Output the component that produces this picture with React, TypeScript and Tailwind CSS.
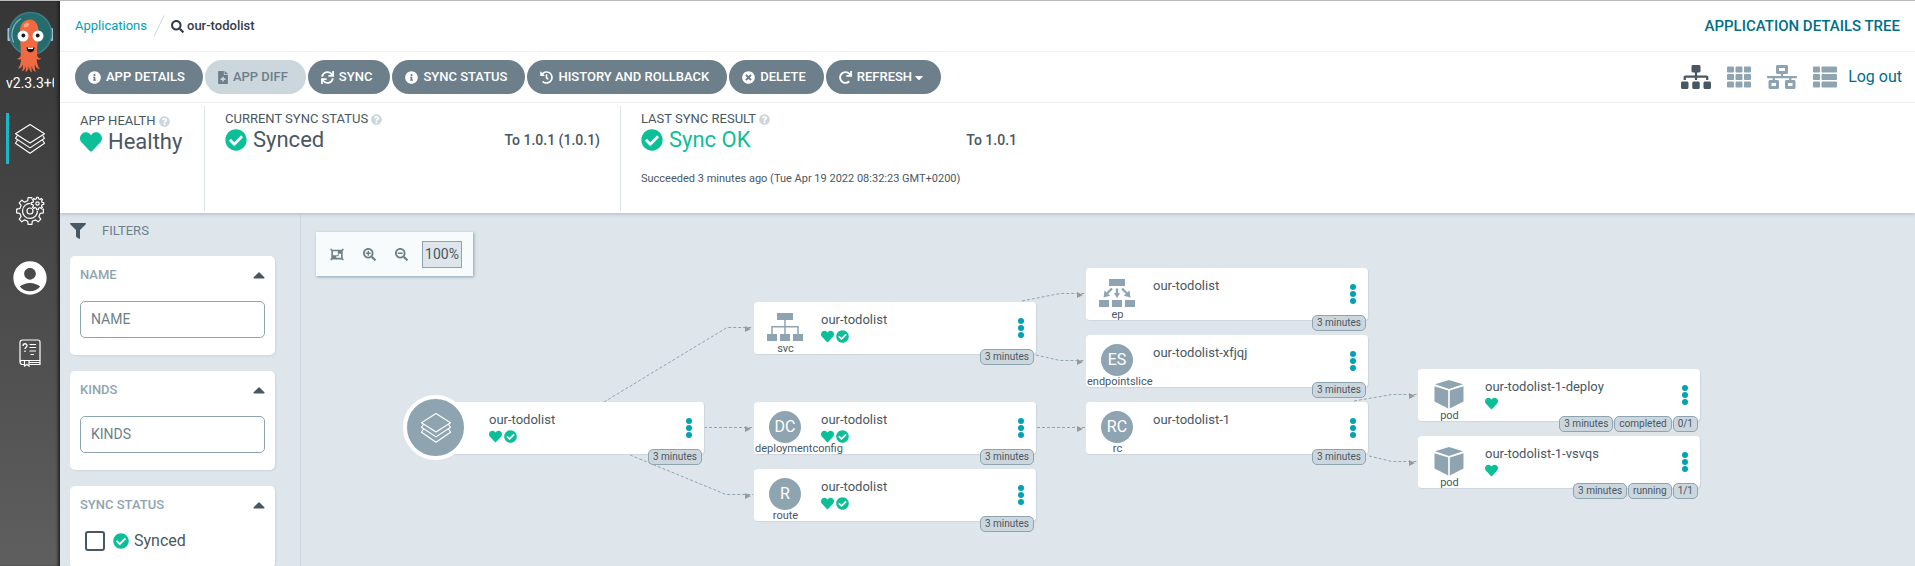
import type { ReactNode } from "react";
import {
  FaCaretDown,
  FaCaretUp,
  FaCheckCircle,
  FaFileMedical,
  FaFilter,
  FaHeart,
  FaHistory,
  FaInfoCircle,
  FaNetworkWired,
  FaObjectGroup,
  FaQuestionCircle,
  FaRedo,
  FaSearch,
  FaSearchMinus,
  FaSearchPlus,
  FaSitemap,
  FaSync,
  FaTh,
  FaThList,
  FaTimesCircle,
} from "react-icons/fa";
import { MdAccountCircle } from "react-icons/md";

function ArgoLogo() {
  return (
    <svg viewBox="0 0 48 62" className="h-[62px] w-12" aria-label="Argo">
      <rect x="1.500" y="17" width="3.500" height="13" rx="1" fill="#a9c6dc" />
      <rect x="43.500" y="17" width="3.500" height="13" rx="1" fill="#a9c6dc" />
      <circle cx="24.500" cy="22.500" r="21" fill="#256d6c" stroke="#3f7d8c" strokeWidth="1.500" />
      <path d="M7.500 31a18.500 18.500 0 0 1 7-23" fill="none" stroke="#7fb3b5" strokeWidth="1.300" strokeLinecap="round" />
      <path
        d="M24.500 8.500c-7 0-10.500 5-10.500 11.500 0 9 .8 15 .8 22 0 4-.5 5-3.800 5.500 1.500 1.500 2.500 1.200 4 .5 0 4-1 7-3 9.500 2.500 0 4-1.500 5-4 .2 3-.2 5-1.500 7 2.500-.5 4-3 4.500-6 0 2.500 0 4.500-.5 6.500 2-.5 3-3 3.300-6 .5 3 1 5.500 3.200 6.500-.5-2-.5-4-.3-6.500.7 3 2 5.500 4.300 6-1-2-1.500-4.500-1.200-7.500 1 2.500 2.500 4.500 5 4.500-2-2.500-3-6-3-10 1.500.7 3 1 4.500-.5-3.500-.5-4.300-2-4.300-5.500 0-7 1.500-13 1.500-22 0-6.500-3.500-11.500-8-11.500z"
        fill="#ef6a42"
      />
      <ellipse cx="20.500" cy="14" rx="3" ry="2" fill="#f6a07f" transform="rotate(-30 20.500 14)" />
      <circle cx="17" cy="25" r="5.500" fill="#fff" />
      <circle cx="32" cy="25" r="5.500" fill="#fff" />
      <circle cx="17.300" cy="24.500" r="1.900" fill="#15191c" />
      <circle cx="31.700" cy="24.500" r="1.900" fill="#15191c" />
      <path d="M20.500 36.200c2.500 1 5.500 1 8 0 0 3-1.500 5-4 5s-4-2-4-5z" fill="#1c1415" />
      <path d="M22 36.600c1.800.5 3.500.5 5 0v1.300h-5z" fill="#fff" />
    </svg>
  );
}

function LayersIcon({ className }: { className: string }) {
  return (
    <svg viewBox="0 0 32 32" className={className} fill="none" stroke="currentColor" strokeWidth="1.100" strokeLinejoin="round">
      <path d="M16 1.500 30.500 10.800 16 20 1.500 10.800z" />
      <path d="M3.500 12.200 1.500 15.300 16 24.900 30.500 15.300 28.500 12.200" />
      <path d="M3.500 17 1.500 20.300 16 30.200 30.500 20.300 28.500 17" />
    </svg>
  );
}

function gearPath(cx: number, cy: number, outer: number, inner: number, teeth: number) {
  const step = (Math.PI * 2) / teeth;
  const at = (angle: number, r: number) =>
    `${(cx + Math.cos(angle) * r).toFixed(2)} ${(cy + Math.sin(angle) * r).toFixed(2)}`;
  const points: string[] = [];
  for (let i = 0; i < teeth; i++) {
    const a = i * step - Math.PI / 2;
    points.push(at(a - step * 0.28, inner), at(a - step * 0.18, outer), at(a + step * 0.18, outer), at(a + step * 0.28, inner));
  }
  return `M${points.join("L")}z`;
}

function GearsIcon() {
  return (
    <svg viewBox="0 0 32 32" className="size-8" fill="none" stroke="#fff" strokeWidth="1.200" strokeLinejoin="round">
      <path d={gearPath(16, 16, 13.5, 10.5, 8)} />
      <circle cx="16" cy="16" r="3" />
      <path d="M17 8.500a7.500 7.500 0 1 0 6.500 7" />
      <circle cx="23.500" cy="8.500" r="7.300" fill="#444" stroke="none" />
      <path d={gearPath(23.5, 8.5, 6.3, 4.8, 8)} />
      <circle cx="23.500" cy="8.500" r="1.700" />
    </svg>
  );
}

function ManualIcon() {
  return (
    <svg viewBox="0 0 22 28" className="h-7 w-[22px]" fill="none" stroke="#fff" strokeWidth="1.200">
      <path d="M5 25.500H3.500a2.500 2.500 0 0 1-2.500-2.500V3.500A2.500 2.500 0 0 1 3.500 1H19a2 2 0 0 1 2 2v22.500H10.500M21 21.500H3.500a2 2 0 0 0-2.200 1.500M10 23.500h11" />
      <path d="M5.500 21.500v5.500l2.300-1.500L10 27v-5.500" />
      <path d="M4 7c0-3 4-2.800 4-.5C8 8.300 6 8 6 10M6 11.500v1.500" strokeWidth="1.300" />
      <path d="M10.500 5.500h6.500M10.500 8.500h6.500M10.500 12h6.500M11.500 15.500h3.500" />
    </svg>
  );
}

function ServiceIcon() {
  return (
    <svg viewBox="0 0 36 28" className="h-7 w-9" fill="#8fa4b1">
      <path d="M10 0h16v7H10zM0 21h10v7H0zM13 21h10v7H13zM26 21h10v7H26z" />
      <path d="M5 21v-7.300h26V21M18 7v14" fill="none" stroke="#8fa4b1" strokeWidth="1.500" />
    </svg>
  );
}

function EndpointIcon() {
  return (
    <svg viewBox="0 0 36 28" className="h-7 w-9" fill="#8fa4b1">
      <path d="M10 0h16v7H10zM0 21h10v7H0zM13 21h10v7H13zM26 21h10v7H26z" />
      <path d="M13 9.500 8 14.500M18 9.500V15M23 9.500 28 14.500" fill="none" stroke="#8fa4b1" strokeWidth="2.300" />
      <path d="M4.500 18.500 5.500 11.500l5.700 5.300zM15 14h6l-3 5.200zM31.500 18.500 30.500 11.500l-5.700 5.300z" />
    </svg>
  );
}

function PodIcon() {
  return (
    <svg viewBox="0 0 30 29" className="h-[29px] w-[30px]" fill="#8fa4b1">
      <path d="M15 0 29 4.300 15 9 1 4.300z" />
      <path d="M.5 6.200 14.200 10.600V28.500L.5 21.500zM29.500 6.200 15.800 10.600V28.500L29.500 21.500z" />
    </svg>
  );
}

function Monogram({ children }: { children: string }) {
  return (
    <span className="flex size-8 items-center justify-center rounded-full bg-[#8fa4b1] text-base text-white">{children}</span>
  );
}

type TreeNode = {
  x: number;
  y: number;
  name: string;
  kind?: string;
  icon?: ReactNode;
  healthy?: boolean;
  synced?: boolean;
  tags: string[];
};

const nodes: TreeNode[] = [
  { x: 121, y: 189, name: "our-todolist", healthy: true, synced: true, tags: ["3 minutes"] },
  { x: 453, y: 89, name: "our-todolist", kind: "svc", icon: <ServiceIcon />, healthy: true, synced: true, tags: ["3 minutes"] },
  { x: 453, y: 189, name: "our-todolist", kind: "deploymentconfig", icon: <Monogram>DC</Monogram>, healthy: true, synced: true, tags: ["3 minutes"] },
  { x: 453, y: 256, name: "our-todolist", kind: "route", icon: <Monogram>R</Monogram>, healthy: true, synced: true, tags: ["3 minutes"] },
  { x: 785, y: 55, name: "our-todolist", kind: "ep", icon: <EndpointIcon />, tags: ["3 minutes"] },
  { x: 785, y: 122, name: "our-todolist-xfjqj", kind: "endpointslice", icon: <Monogram>ES</Monogram>, tags: ["3 minutes"] },
  { x: 785, y: 189, name: "our-todolist-1", kind: "rc", icon: <Monogram>RC</Monogram>, tags: ["3 minutes"] },
  { x: 1117, y: 156, name: "our-todolist-1-deploy", kind: "pod", icon: <PodIcon />, healthy: true, tags: ["3 minutes", "completed", "0/1"] },
  { x: 1117, y: 223, name: "our-todolist-1-vsvqs", kind: "pod", icon: <PodIcon />, healthy: true, tags: ["3 minutes", "running", "1/1"] },
];

const edges = [
  "303,189 426,114.5 452,114.5",
  "403,214.5 452,214.5",
  "329,242 425,281.5 452,281.5",
  "721,88 759,80.5 784,80.5",
  "735,142 759,147.5 784,147.5",
  "736,214.5 784,214.5",
  "1053,188 1091,181.5 1116,181.5",
  "1068,243 1091,248.5 1116,248.5",
];

function Edges() {
  return (
    <svg className="absolute inset-0 size-full">
      {edges.map((points) => {
        const [tipX, tipY] = points.split(" ").slice(-1)[0].split(",").map(Number);
        return (
          <g key={points}>
            <polyline points={points} fill="none" stroke="#8fa4b1" strokeWidth="1" strokeDasharray="3 2" />
            <path d={`M${tipX - 8} ${tipY - 1.5}v6l6-3z`} fill="#999" />
          </g>
        );
      })}
    </svg>
  );
}

function NodeCard({ node }: { node: TreeNode }) {
  return (
    <article
      className="absolute flex h-[52px] w-[282px] rounded-[4px] bg-white shadow-[1px_1px_1px_#ccd6dd]"
      style={{ left: node.x, top: node.y }}
    >
      {node.kind ? (
        <div className="flex w-[62px] flex-col">
          <div className="flex h-[41px] items-end justify-center">
            <div className="flex h-8 items-center">{node.icon}</div>
          </div>
          <span className="flex w-max min-w-full justify-center pl-px text-[11px] leading-[11px] whitespace-nowrap">{node.kind}</span>
        </div>
      ) : (
        <div className="w-[62px]">
          <div className="absolute -top-[7px] -left-[19px] flex size-[65px] items-center justify-center rounded-full border-4 border-white bg-[#8fa4b1] text-white">
            <LayersIcon className="size-8" />
          </div>
        </div>
      )}
      <div className="absolute inset-y-0 left-[67px] flex flex-col pt-2">
        <span className="text-[13px] leading-5">{node.name}</span>
        <span className="flex gap-0.5 text-[13px] text-[#0cbf98]">
          {node.healthy && <FaHeart />}
          {node.synced && <FaCheckCircle />}
        </span>
      </div>
      <button aria-label="Node actions" className="ml-auto flex w-[30px] items-center justify-center">
        <svg viewBox="0 0 6 20" className="h-5 w-1.5" fill="#00a2b3">
          <circle cx="3" cy="3" r="3" />
          <circle cx="3" cy="10" r="3" />
          <circle cx="3" cy="17" r="3" />
        </svg>
      </button>
      <div className="absolute right-0.5 -bottom-[11px] flex gap-px">
        {node.tags.map((tag) => (
          <span key={tag} className="h-4 rounded-[5px] border border-[#8fa4b1] bg-[#ccd6dd] px-1 text-[10px] leading-[14px]">
            {tag}
          </span>
        ))}
      </div>
    </article>
  );
}

function ActionButton({ icon, children, disabled }: { icon: ReactNode; children: ReactNode; disabled?: boolean }) {
  return (
    <button
      disabled={disabled}
      className="flex h-[34px] items-center gap-[5px] rounded-full bg-[#6d7f8b] pr-[18px] pl-[13px] text-[13px] font-medium whitespace-nowrap text-white disabled:bg-[#ccd6dd] disabled:text-[#6d7f8b]"
    >
      {icon}
      {children}
    </button>
  );
}

function StatusLabel({ children }: { children: string }) {
  return (
    <h2 className="flex items-center gap-[3px] text-[13px] leading-5 whitespace-nowrap">
      {children}
      <FaQuestionCircle className="text-[11px] text-[#ccd6dd]" />
    </h2>
  );
}

function FilterCard({ title, children }: { title: string; children: ReactNode }) {
  return (
    <section className="rounded-[5px] bg-white px-2.5 pt-[9px] pb-[17px] shadow-[1px_1px_2px_#ccd6dd]">
      <header className="mb-4 flex h-5 items-center justify-between">
        <h3 className="text-[13px] font-medium text-[#8fa4b1]">{title}</h3>
        <button aria-label={`Collapse ${title}`}>
          <FaCaretUp className="h-5 w-3" />
        </button>
      </header>
      {children}
    </section>
  );
}

function FilterInput({ label }: { label: string }) {
  return (
    <input
      aria-label={label}
      placeholder={label}
      className="block h-[37px] w-full rounded-[5px] border border-[#8fa4b1] px-2.5 text-sm outline-none placeholder:text-[#6d7f8b]"
    />
  );
}

export default function App() {
  return (
    <div className="flex h-screen overflow-hidden bg-[#dee6eb] font-[Roboto,'Liberation_Sans',sans-serif] text-[#495763]">
      <nav className="z-20 flex w-[60px] shrink-0 flex-col items-center border-t border-[#bbb] bg-linear-to-b from-[#363636] to-[#5f5f5f] shadow-[inset_-3px_0_3px_-1px_#222]">
        <a href="#home" className="mt-2.5">
          <ArgoLogo />
        </a>
        <span className="w-12 overflow-hidden text-sm leading-5 whitespace-nowrap text-white">v2.3.3+07ac038</span>
        <a
          href="#applications"
          aria-label="Applications"
          className="mt-5 ml-1.5 flex h-[51px] w-[45px] items-center justify-center self-start border-l-3 border-[#17b8c9] text-white"
        >
          <LayersIcon className="size-8" />
        </a>
        <a href="#settings" aria-label="Settings" className="mt-[31px]">
          <GearsIcon />
        </a>
        <a href="#user" aria-label="User info" className="mt-[31px] text-white">
          <MdAccountCircle className="size-10" />
        </a>
        <a href="#help" aria-label="Documentation" className="mt-[41px]">
          <ManualIcon />
        </a>
      </nav>

      <div className="flex min-w-0 flex-1 flex-col">
        <div className="z-10 bg-white shadow-[0_1px_4px_#aab6bd]">
          <header className="flex h-[52px] items-center justify-between border-t border-b border-t-[#bbb] border-b-[#eee] px-[15px]">
            <div className="flex items-center text-[13px]">
              <a href="#applications" className="text-[#00a2b3]">Applications</a>
              <svg viewBox="0 0 12 22" className="mx-1.5 h-[22px] w-3" fill="none" stroke="#ccd6dd">
                <path d="M1 21.500 11 .5" />
              </svg>
              <FaSearch className="mr-[3px] text-[#363c4a]" />
              <h1 className="font-medium text-[#363c4a]">our-todolist</h1>
            </div>
            <span className="text-[15px] font-medium text-[#006f8a]">APPLICATION DETAILS TREE</span>
          </header>

          <div className="flex h-[51px] items-center justify-between border-b border-[#eee] pr-[13px] pl-[15px]">
            <div className="flex gap-0.5">
              <ActionButton icon={<FaInfoCircle />}>APP DETAILS</ActionButton>
              <ActionButton icon={<FaFileMedical className="w-2.5" />} disabled>APP DIFF</ActionButton>
              <ActionButton icon={<FaSync />}>SYNC</ActionButton>
              <ActionButton icon={<FaInfoCircle />}>SYNC STATUS</ActionButton>
              <ActionButton icon={<FaHistory />}>HISTORY AND ROLLBACK</ActionButton>
              <ActionButton icon={<FaTimesCircle />}>DELETE</ActionButton>
              <ActionButton icon={<FaRedo />}>
                <span className="flex items-center gap-[3px]">
                  REFRESH
                  <FaCaretDown className="w-2" />
                </span>
              </ActionButton>
            </div>
            <div className="flex items-center text-[#8fa4b1]">
              <button aria-label="Tree" className="mr-4 text-[#495763]">
                <FaSitemap className="h-6 w-[30px]" />
              </button>
              <button aria-label="Pods" className="mr-4">
                <FaTh className="size-6" />
              </button>
              <button aria-label="Network" className="mr-4">
                <FaNetworkWired className="h-6 w-[30px]" />
              </button>
              <button aria-label="List" className="mr-[11px]">
                <FaThList className="size-6" />
              </button>
              <a href="#logout" className="text-base text-[#006f8a]">Log out</a>
            </div>
          </div>

          <div className="flex h-[110px] pt-[3px] pb-0.5">
            <section className="w-[145px] border-r border-[#dee6eb] pt-[5px] pl-5">
              <StatusLabel>APP HEALTH</StatusLabel>
              <p className="flex items-center gap-1.5 text-[22px] leading-5">
                <FaHeart className="text-[#0cbf98]" />
                Healthy
              </p>
            </section>
            <section className="w-[416px] border-r border-[#dee6eb] px-5 pt-[3px]">
              <StatusLabel>CURRENT SYNC STATUS</StatusLabel>
              <div className="flex items-center justify-between">
                <p className="flex items-center gap-1.5 text-[22px] leading-5">
                  <FaCheckCircle className="text-[#0cbf98]" />
                  Synced
                </p>
                <span className="text-sm leading-5 font-medium">To 1.0.1 (1.0.1)</span>
              </div>
            </section>
            <section className="w-[416px] px-5 pt-[3px]">
              <StatusLabel>LAST SYNC RESULT</StatusLabel>
              <div className="flex items-center justify-between">
                <p className="flex items-center gap-1.5 text-[22px] leading-5 text-[#0cbf98]">
                  <FaCheckCircle />
                  Sync OK
                </p>
                <span className="text-sm leading-5 font-medium">To 1.0.1</span>
              </div>
              <p className="mt-[18px] text-[11px] leading-5 whitespace-nowrap">
                Succeeded 3 minutes ago (Tue Apr 19 2022 08:32:23 GMT+0200)
              </p>
            </section>
          </div>
        </div>

        <main className="flex min-h-0 flex-1">
          <aside className="flex w-[241px] shrink-0 flex-col gap-4 border-r border-[#ccd6dd] pt-2 pr-[25px] pl-2.5">
            <div className="-mb-px flex h-5 items-center gap-4">
              <FaFilter className="size-4" />
              <h2 className="text-[13px] text-[#6d7f8b]">FILTERS</h2>
            </div>
            <FilterCard title="NAME">
              <FilterInput label="NAME" />
            </FilterCard>
            <FilterCard title="KINDS">
              <FilterInput label="KINDS" />
            </FilterCard>
            <FilterCard title="SYNC STATUS">
              <label className="mt-1 flex h-5 items-center pl-[5px] text-base">
                <input type="checkbox" className="size-5 appearance-none rounded-[3px] border-2 border-[#495763]" />
                <FaCheckCircle className="mr-[5px] ml-2 text-[#0cbf98]" />
                Synced
              </label>
            </FilterCard>
          </aside>

          <div className="relative min-w-0 flex-1 overflow-hidden">
            <Edges />
            {nodes.map((node) => (
              <NodeCard key={`${node.x}-${node.y}`} node={node} />
            ))}
            <div className="absolute top-[19px] left-[15px] flex h-11 items-center bg-[#f8fbfb] pr-[11px] pl-[14px] text-[13px] text-[#6d7f8b] shadow-[1px_1px_3px_#8fa4b1]">
              <button aria-label="Group nodes" className="mr-[19px]"><FaObjectGroup className="w-3.5" /></button>
              <button aria-label="Zoom in" className="mr-[19px]"><FaSearchPlus /></button>
              <button aria-label="Zoom out" className="mr-3.5"><FaSearchMinus /></button>
              <span className="flex h-[27px] w-10 items-center justify-center border border-[#8fa4b1] bg-[#dee6eb] text-sm text-[#495763]">100%</span>
            </div>
          </div>
        </main>
      </div>
    </div>
  );
}
